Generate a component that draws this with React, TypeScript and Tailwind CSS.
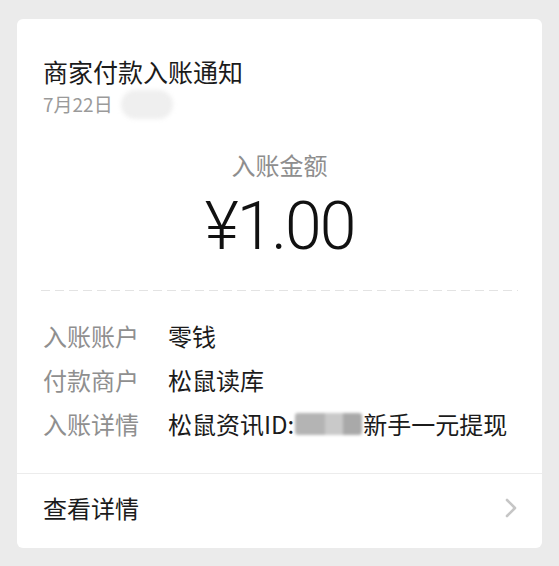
const cjk = "font-['Noto_Sans_CJK_SC','Noto_Sans',sans-serif]";

const rows = [
  { label: "入账账户", value: <>零钱</> },
  { label: "付款商户", value: <>松鼠读库</> },
  {
    label: "入账详情",
    value: (
      <>
        松鼠资讯ID:
        <span className="mx-[1px] inline-flex h-[22px] w-[67px] overflow-hidden rounded-[3px] blur-[1.5px]">
          <span className="w-[30px] bg-[#b4b4b4]" />
          <span className="w-[18px] bg-[#c9c9c9]" />
          <span className="w-[19px] bg-[#a9a9a9]" />
        </span>
        新手一元提现
      </>
    ),
  },
];

const Chevron = () => (
  <svg width="14" height="20" viewBox="0 0 14 20" fill="none">
    <path d="M3 2 L11 10 L3 18" stroke="#c6c6c6" strokeWidth="2.6" strokeLinecap="round" strokeLinejoin="round" />
  </svg>
);

export default function App() {
  return (
    <div className={`h-[566px] w-[559px] bg-[#ebebeb] pt-[19px] ${cjk}`}>
      <div className="mx-[17px] w-[525px] rounded-[6px] bg-white">
        {/* header */}
        <div className="px-[26px] pt-[35px]">
          <div className="text-[25px] leading-[34px] text-[#1b1b1b]">商家付款入账通知</div>
          <div className="mt-[5px] flex h-[22px] items-center">
            <span className="text-[19px] text-[#9a9a9a]">7月22日</span>
            <span className="ml-[8px] h-[29px] w-[52px] rounded-full bg-[#efefef] blur-[2px]" />
          </div>
        </div>

        {/* amount */}
        <div className="mt-[34px] flex flex-col items-center">
          <div className="text-[24px] leading-[32px] text-[#8e8e8e]">入账金额</div>
          <div className="mt-[13px] font-['Roboto',sans-serif] text-[66px] font-light leading-[66px] tracking-[-2px] text-[#111]">
            ¥1.00
          </div>
        </div>

        <div className="mx-[24px] mt-[30px] h-px bg-[repeating-linear-gradient(to_right,#e3e3e3_0_9px,transparent_9px_14px)]" />

        {/* details */}
        <div className="mt-[23px] px-[26px] pb-[27px]">
          {rows.map((r) => (
            <div key={r.label} className="flex h-[44px] items-center text-[24px]">
              <span className="w-[125px] shrink-0 text-[#8f8f8f]">{r.label}</span>
              <span className="flex items-center whitespace-nowrap text-[#1b1b1b]">{r.value}</span>
            </div>
          ))}
        </div>

        <div className="h-px bg-[#ececec]" />

        {/* footer */}
        <div className="flex h-[74px] items-center justify-between pb-[6px] pl-[26px] pr-[24px]">
          <span className="text-[24px] text-[#1b1b1b]">查看详情</span>
          <Chevron />
        </div>
      </div>
    </div>
  );
}
